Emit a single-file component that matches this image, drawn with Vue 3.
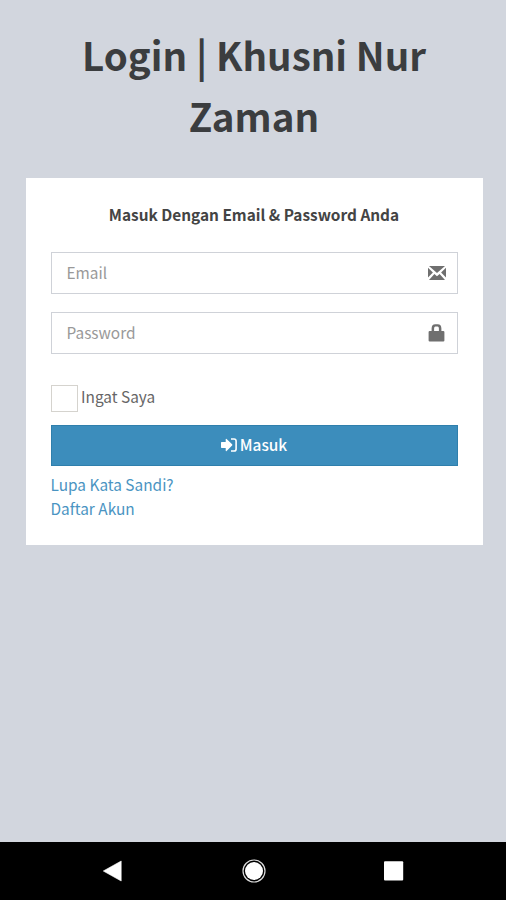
<script setup>
import { ref } from 'vue'

const email = ref('')
const password = ref('')
const remember = ref(false)
</script>

<template>
  <div class="screen">
    <main class="page">
      <h1 class="title">Login | Khusni Nur Zaman</h1>
      <form class="card" @submit.prevent>
        <p class="message">Masuk Dengan Email &amp; Password Anda</p>
        <div class="field">
          <input v-model="email" class="input mail" type="email" placeholder="Email" />
          <svg class="icon" viewBox="0 0 18 18" fill="#6f6f6f">
            <path d="M1 1.9h16L9 9.1zM0 3.7l4.9 4.8L0 13.5zM18 3.7l-4.9 4.8 4.9 5zM1 16l5.4-6.1L9 12.3l2.6-2.4L17 16z" />
          </svg>
        </div>
        <div class="field">
          <input v-model="password" class="input pass" type="password" placeholder="Password" />
          <svg class="icon" viewBox="0 0 18 18" fill="#6f6f6f">
            <path fill-rule="evenodd" d="M3.6 7V4.6Q3.6.2 7.3.2h2.4q3.7 0 3.7 4.4V7h1.9q1.1 0 1.1 1.1v8.3q0 1.1-1.1 1.1H1.7q-1.1 0-1.1-1.1V8.1Q.6 7 1.7 7zM6.1 7h4.8V4.4q0-1.8-1.3-1.8H7.4q-1.3 0-1.3 1.8z" />
          </svg>
        </div>
        <label class="remember">
          <input v-model="remember" class="check" type="checkbox" />
          <span class="remember-text">Ingat Saya</span>
        </label>
        <button class="submit" type="submit">
          <svg class="enter" viewBox="0 0 16 14" fill="#fff">
            <path d="M0 4.7q0-.6.6-.6h4.1V1.4q0-1.1.9-.5l5.5 5.4q.6.7 0 1.3l-5.5 5.5q-.9.6-.9-.5V9.9H.6q-.6 0-.6-.6z" />
            <path d="M10 1h3q2.1 0 2.1 2.1v7.8q0 2.1-2.1 2.1h-3" fill="none" stroke="#fff" stroke-width="1.6" />
          </svg>
          <span class="submit-text">Masuk</span>
        </button>
        <div class="links">
          <a class="forgot">Lupa Kata Sandi?</a>
          <a class="register">Daftar Akun</a>
        </div>
      </form>
    </main>
    <nav class="navbar">
      <svg class="nav-icon" viewBox="0 0 24 24"><path d="M1.3 12 19.2 2v20z" fill="#fff" stroke="#fff" stroke-width=".6" stroke-linejoin="round" /></svg>
      <svg class="nav-icon" viewBox="0 0 24 24"><circle cx="12" cy="12" r="11" fill="none" stroke="#ddd" stroke-width="1.2" /><circle cx="12" cy="12" r="9" fill="#fff" /></svg>
      <svg class="nav-icon" viewBox="0 0 24 24"><rect x="2" y="2.3" width="19.2" height="19.2" rx="1" fill="#fff" /></svg>
    </nav>
  </div>
</template>

<style>
body {
  margin: 0;
  background: #d2d6de;
}
</style>

<style scoped>
.screen {
  box-sizing: border-box;
  display: flex;
  flex-direction: column;
  height: 900px;
  background: #d2d6de;
  color: #666;
  font-family: "Noto Sans CJK SC", "Noto Sans", sans-serif;
  font-size: 15.4px;
  line-height: 24px;
}
.page {
  flex: 1;
  padding: 24px 23.5px 0 25.5px;
}
.title {
  width: 380px;
  margin: 0 auto 32px;
  color: #3b3d3f;
  font-size: 38.5px;
  font-weight: 700;
  line-height: 61px;
  text-align: center;
}
.card {
  box-sizing: border-box;
  height: 367px;
  padding: 24px 25px 0;
  background: #fff;
}
.message {
  margin: 0 0 26px;
  color: #444;
  font-weight: 700;
  text-align: center;
}
.field {
  display: flex;
  align-items: center;
  box-sizing: border-box;
  height: 42px;
  margin-bottom: 18px;
  padding: 0 11px 0 15px;
  border: 1px solid #cfd2d8;
}
.input {
  flex: 1;
  min-width: 0;
  height: 40px;
  padding: 0 0 2px;
  border: 0;
  outline: 0;
  background: transparent;
  color: #555;
  font: inherit;
}
.input::placeholder {
  color: #999;
  opacity: 1;
}
.icon {
  width: 18px;
  height: 18px;
}
.remember {
  display: flex;
  align-items: center;
  gap: 3.5px;
  height: 27px;
  margin-top: 31px;
}
.check {
  box-sizing: border-box;
  appearance: none;
  width: 27px;
  height: 27px;
  margin: 0;
  border: 1px solid #d5d3ce;
  background: #fff;
}
.remember-text {
  padding-bottom: 5px;
}
.submit {
  display: flex;
  align-items: center;
  justify-content: center;
  gap: 3px;
  box-sizing: border-box;
  width: 100%;
  height: 41px;
  margin: 13px 0 6px;
  padding: 0 0 1px;
  border: 1px solid #2f7fac;
  border-radius: 0;
  background: #3c8dbc;
  color: #fff;
  font: inherit;
  font-weight: 500;
}
.submit-text {
  padding-bottom: 2px;
}
.enter {
  width: 16px;
  height: 14px;
}
.links {
  display: flex;
  flex-direction: column;
  align-items: flex-start;
  color: #4a94c2;
}
.navbar {
  display: flex;
  justify-content: center;
  gap: 116px;
  box-sizing: border-box;
  height: 58.5px;
  padding: 17.5px 0 0 1px;
  background: #000;
}
.nav-icon {
  width: 24px;
  height: 24px;
}
</style>
